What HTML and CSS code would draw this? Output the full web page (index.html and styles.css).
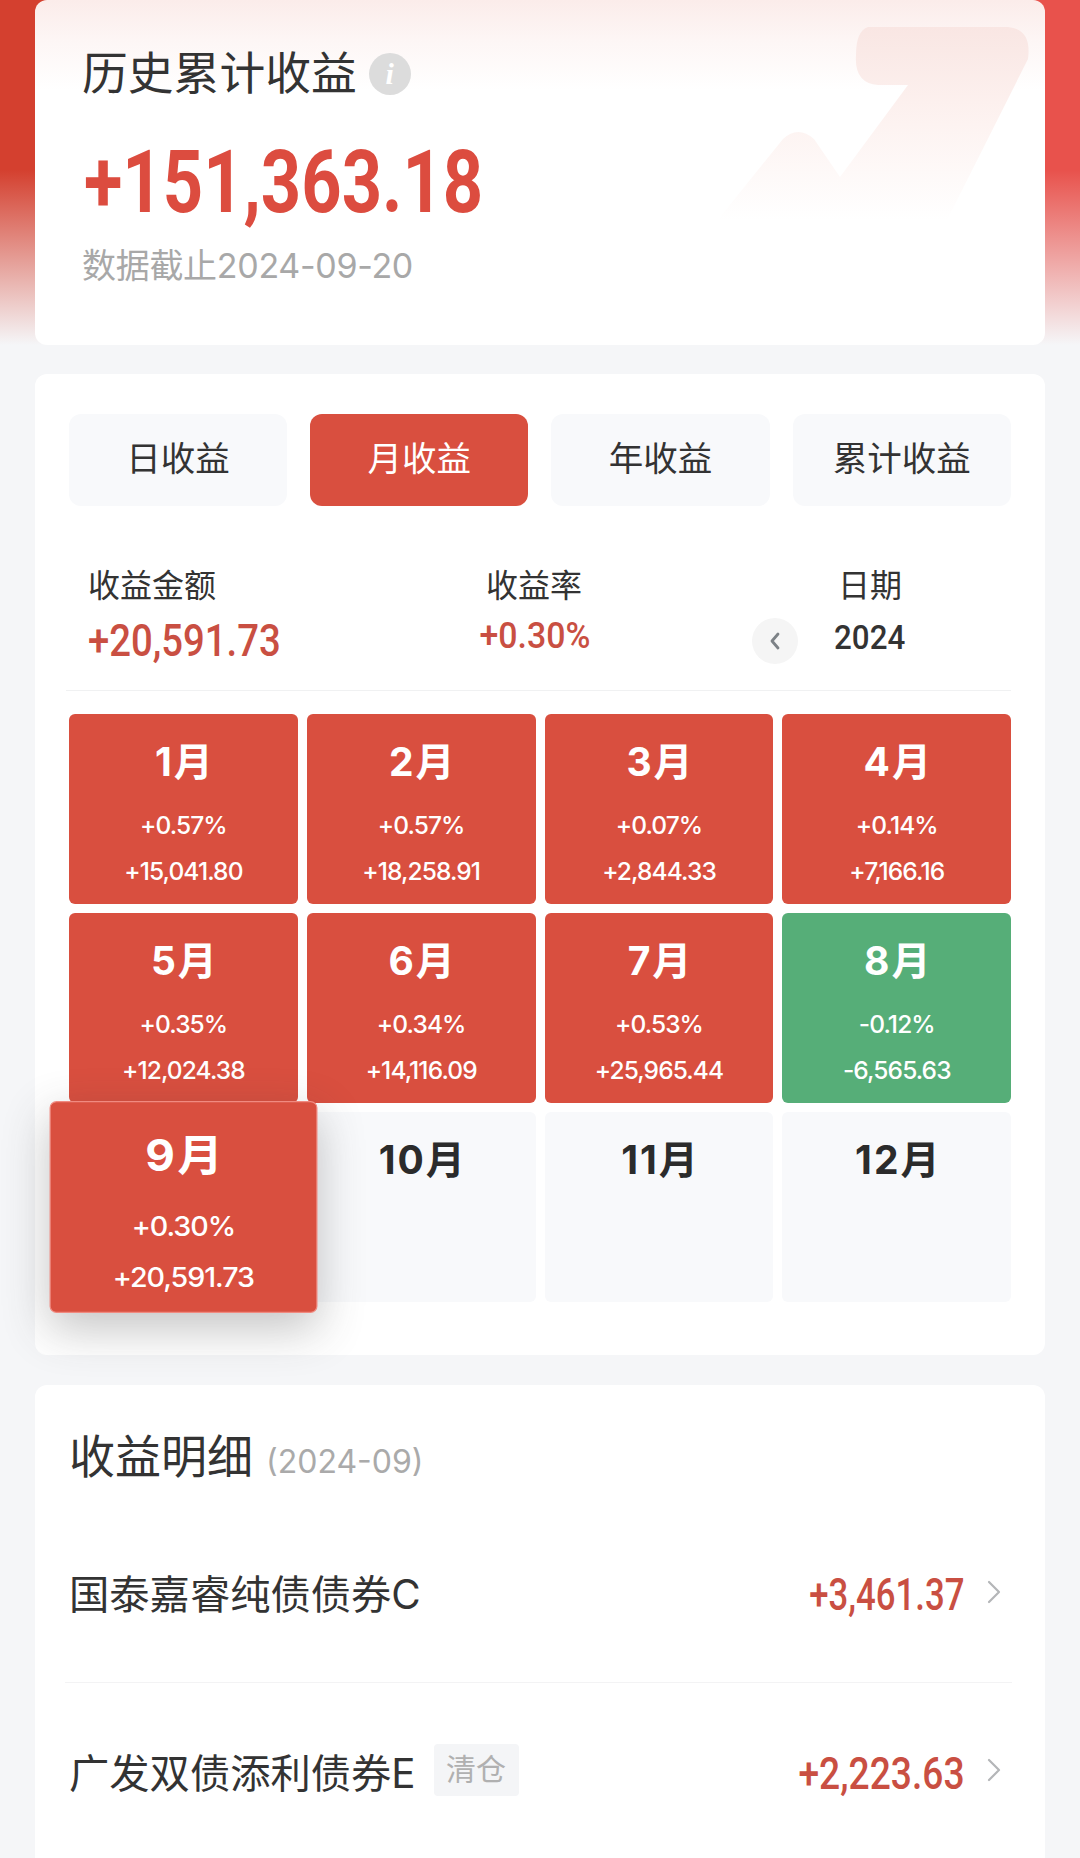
FILE: index.html
```html
<!DOCTYPE html>
<html lang="zh">

<head>
	<meta charset="UTF-8">
	<meta name="viewport" content="width=device-width, initial-scale=1.0">
	<title>历史累计收益</title>
	<link rel="stylesheet" href="styles.css">
</head>

<body>
	<section class="card summary">
		<svg class="watermark" width="360" height="240" viewBox="0 0 360 240">
			<defs>
				<linearGradient id="markFade" x1="0" y1="0" x2="0" y2="1">
					<stop offset="0" stop-color="#f9e6e3"></stop>
					<stop offset="0.45" stop-color="#fdf3f1"></stop>
					<stop offset="0.9" stop-color="#ffffff"></stop>
				</linearGradient>
			</defs>
			<path fill="url(#markFade)" d="M198 0H338Q362 2 358 32L266 215H30L113 112Q128 98 144 112L170 150L238 58H208Q184 56 186 28Q186 4 198 0Z"></path>
		</svg>
		<h1 class="summary-title">历史累计收益<span class="info">i</span></h1>
		<div class="summary-total"><span class="num num-hero">+151,363.18</span></div>
		<p class="summary-date">数据截止2024-09-20</p>
	</section>

	<section class="card profit">
		<div class="tabs">
			<div class="tab">日收益</div>
			<div class="tab active">月收益</div>
			<div class="tab">年收益</div>
			<div class="tab">累计收益</div>
		</div>

		<div class="stats">
			<div class="stat-money">
				<div class="stat-label">收益金额</div>
				<div class="stat-value"><span class="num num-money">+20,591.73</span></div>
			</div>
			<div class="stat-rate">
				<div class="stat-label">收益率</div>
				<div class="stat-value"><span class="num num-rate">+0.30%</span></div>
			</div>
			<div class="stat-date">
				<div class="stat-label date-label">日期</div>
				<div class="year-prev">
					<svg width="12" height="20" viewBox="0 0 12 20">
						<path d="M9 3L3 10L9 17" fill="none" stroke="#7d8287" stroke-width="2.8" stroke-linecap="round" stroke-linejoin="round"></path>
					</svg>
				</div>
				<div class="year"><span class="num num-year">2024</span></div>
			</div>
		</div>

		<div class="months">
			<div class="month up"><b>1月</b><span>+0.57%</span><span>+15,041.80</span></div>
			<div class="month up"><b>2月</b><span>+0.57%</span><span>+18,258.91</span></div>
			<div class="month up"><b>3月</b><span>+0.07%</span><span>+2,844.33</span></div>
			<div class="month up"><b>4月</b><span>+0.14%</span><span>+7,166.16</span></div>
			<div class="month up"><b>5月</b><span>+0.35%</span><span>+12,024.38</span></div>
			<div class="month up"><b>6月</b><span>+0.34%</span><span>+14,116.09</span></div>
			<div class="month up"><b>7月</b><span>+0.53%</span><span>+25,965.44</span></div>
			<div class="month down"><b>8月</b><span>-0.12%</span><span>-6,565.63</span></div>
			<div class="month up current"><b>9月</b><span>+0.30%</span><span>+20,591.73</span></div>
			<div class="month"><b>10月</b></div>
			<div class="month"><b>11月</b></div>
			<div class="month"><b>12月</b></div>
		</div>
	</section>

	<section class="card detail">
		<h2 class="detail-title">收益明细<small>(2024-09)</small></h2>
		<div class="row">
			<div class="row-name">国泰嘉睿纯债债券C</div>
			<div class="row-value"><span class="num num-row">+3,461.37</span></div>
			<svg class="row-arrow" width="14" height="24" viewBox="0 0 14 24">
				<path d="M2 2L12 12L2 22" fill="none" stroke="#b4b6b8" stroke-width="2.2" stroke-linecap="round" stroke-linejoin="round"></path>
			</svg>
		</div>
		<div class="row">
			<div class="row-name">广发双债添利债券E</div>
			<div class="row-tag">清仓</div>
			<div class="row-value"><span class="num num-row num-wide">+2,223.63</span></div>
			<svg class="row-arrow" width="14" height="24" viewBox="0 0 14 24">
				<path d="M2 2L12 12L2 22" fill="none" stroke="#b4b6b8" stroke-width="2.2" stroke-linecap="round" stroke-linejoin="round"></path>
			</svg>
		</div>
	</section>
</body>

</html>
```

FILE: styles.css
```css
* {
	margin: 0;
	padding: 0;
	box-sizing: border-box;
}

html,
body {
	height: 1858px;
	overflow: hidden;
}

body {
	font-family: "Inter", "Noto Sans CJK SC", sans-serif;
	color: #333;
	background-color: #f5f6f8;
	background-image:
		linear-gradient(to bottom, rgba(245, 246, 248, 0) 170px, #f5f6f8 345px),
		linear-gradient(to right, #d4402f 0, #d4402f 35px, #e8524c 1045px, #e8524c 100%);
	background-size: 100% 345px;
	background-repeat: no-repeat;
}

.card {
	margin: 0 35px;
	background-color: #fff;
	border-radius: 12px;
}

.num {
	display: inline-block;
	font-family: "Roboto", sans-serif;
	font-weight: 700;
	color: #c94f42;
	transform-origin: left center;
	white-space: nowrap;
}

/* 顶部累计收益 */
.summary {
	position: relative;
	height: 345px;
	padding: 48px 47px 0;
	overflow: hidden;
	background: linear-gradient(to bottom, #fbecea 0, #fdf6f5 40px, #fff 90px);
}

.watermark {
	position: absolute;
	top: 27px;
	left: 635px;
}

.summary-title {
	position: relative;
	display: flex;
	align-items: center;
	height: 52px;
	font-size: 45.8px;
	font-weight: 400;
	line-height: 52px;
}

.info {
	display: flex;
	align-items: center;
	justify-content: center;
	width: 42px;
	height: 42px;
	margin-left: 12px;
	border-radius: 50%;
	background-color: #dcdcdc;
	font-family: "Liberation Serif", serif;
	font-size: 30px;
	font-style: italic;
	font-weight: 700;
	color: #fff;
}

.summary-total {
	position: relative;
	height: 84px;
	margin-top: 40px;
	line-height: 84px;
}

.num-hero {
	margin-left: 2px;
	font-size: 88px;
	color: #dc4c3f;
	transform: scaleX(0.8);
}

.summary-date {
	position: relative;
	margin-top: 20px;
	font-size: 34px;
	letter-spacing: -0.3px;
	line-height: 44px;
	color: #a8a8a8;
}

/* 月收益 */
.profit {
	margin-top: 29px;
	height: 981px;
	padding: 40px 34px 0;
}

.tabs {
	display: grid;
	grid-template-columns: repeat(4, 218.2px);
	column-gap: 23px;
}

.tab {
	height: 92px;
	border-radius: 12px;
	background-color: #f8f9fb;
	font-size: 34.5px;
	line-height: 90px;
	text-align: center;
}

.tab.active {
	background-color: #d94f3f;
	color: #fff;
}

.stats {
	display: grid;
	grid-template-columns: 391px 273px 1fr;
	height: 125px;
	margin-top: 60px;
	margin-left: -3px;
	padding-left: 22px;
	border-bottom: 1px solid #f0f1f2;
}

.stat-label {
	font-size: 32px;
	line-height: 40px;
}

.stat-value {
	height: 50px;
	margin-top: 10px;
	line-height: 50px;
}

.stat-rate {
	width: 110px;
	text-align: center;
}

.num-money {
	font-size: 44px;
	font-weight: 500;
	transform: scaleX(0.87);
}

.num-rate {
	margin-top: -5px;
	margin-left: -3px;
	font-size: 36px;
	font-weight: 500;
	transform: scaleX(0.94);
	transform-origin: center;
}

.stat-date {
	display: grid;
	grid-template-columns: 46px 70px;
	column-gap: 37px;
	align-items: center;
	align-content: start;
}

.date-label {
	grid-column: 2;
	grid-row: 1;
	text-align: center;
}

.year-prev {
	display: flex;
	align-items: center;
	justify-content: center;
	grid-column: 1;
	grid-row: 2;
	width: 46px;
	height: 46px;
	margin-top: 12px;
	border-radius: 50%;
	background-color: #f5f5f5;
}

.year {
	grid-column: 2;
	grid-row: 2;
	margin-top: 4px;
	margin-left: -4px;
	text-align: center;
}

.num-year {
	font-size: 34px;
	font-weight: 500;
	color: #333;
	transform: scaleX(0.92);
	transform-origin: center;
}

.months {
	display: grid;
	grid-template-columns: repeat(4, 228.8px);
	grid-auto-rows: 190px;
	gap: 9px;
	margin-top: 23px;
}

.month {
	display: flex;
	flex-direction: column;
	align-items: center;
	padding-top: 26px;
	border-radius: 6px;
	background-color: #f8f9fb;
	color: #2b2b2b;
}

.month b {
	margin-left: 3px;
	font-size: 39px;
	font-weight: 700;
	letter-spacing: 2px;
	line-height: 44px;
}

.month span {
	font-size: 24.5px;
	font-weight: 500;
	letter-spacing: -0.9px;
	line-height: 30px;
}

.month b + span {
	margin-top: 26px;
}

.month span + span {
	margin-top: 16px;
}

.month.up {
	background-color: #d94f3f;
	color: #fff;
}

.month.down {
	background-color: #56ae78;
	color: #fff;
}

.month.current {
	border: 1.5px solid #f08a80;
	box-shadow: 0 14px 40px rgba(60, 60, 60, 0.3);
	transform: scale(1.17, 1.115);
}

/* 收益明细 */
.detail {
	margin-top: 30px;
	height: 520px;
	padding: 46px 33px 0 30px;
}

.detail-title {
	padding-left: 4px;
	font-size: 46px;
	font-weight: 400;
	line-height: 50px;
}

.detail-title small {
	margin-left: 13px;
	font-size: 32px;
	color: #aaa;
}

.row {
	display: flex;
	align-items: center;
	height: 178px;
	padding-left: 4px;
	padding-bottom: 4px;
}

.detail-title + .row {
	margin-top: 18px;
	border-bottom: 1px solid #f3f3f4;
}

.row-name {
	font-size: 40.3px;
}

.row-tag {
	width: 85px;
	height: 52px;
	margin-left: 18px;
	border-radius: 4px;
	background-color: #f4f5f7;
	font-size: 30px;
	line-height: 50px;
	text-align: center;
	color: #b0b0b0;
}

.row-value {
	margin-left: auto;
	margin-top: 7px;
}

.num-row {
	font-size: 44px;
	font-weight: 500;
	transform: scaleX(0.79);
	transform-origin: right center;
}

.num-wide {
	transform: scaleX(0.845);
}

.row-arrow {
	margin-left: 22px;
	margin-right: 11px;
}
```
